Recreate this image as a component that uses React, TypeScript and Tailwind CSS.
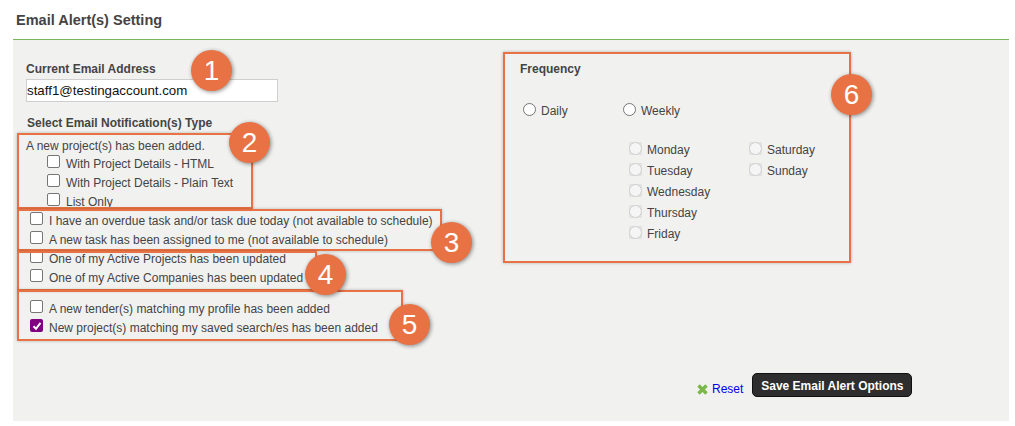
const font = "font-['Liberation_Sans',Arial,sans-serif]";

function Check({ label, checked, left }: { label: string; checked?: boolean; left: string }) {
    return (
        <label className={`flex items-center h-[19px] ${left}`}>
            {checked ? (
                <span className="w-[13px] h-[13px] rounded-[2px] bg-[#800080] flex items-center justify-center shrink-0 -mt-[4px]">
                    <svg width="10" height="10" viewBox="0 0 10 10">
                        <path d="M1.5 5.2 L4 7.8 L8.5 1.8" fill="none" stroke="#fff" strokeWidth="2" />
                    </svg>
                </span>
            ) : (
                <span className="w-[13px] h-[13px] rounded-[2px] border border-[#767676] bg-white shrink-0 -mt-[4px]"></span>
            )}
            <span className="ml-[6px] whitespace-nowrap">{label}</span>
        </label>
    );
}

function Radio({ label, disabled }: { label: string; disabled?: boolean }) {
    return (
        <label className="flex items-center h-[21px]">
            {disabled ? (
                <span className="w-[13px] h-[13px] bg-[#e2e2e2] rounded-[1px] shrink-0 -mt-[3px]">
                    <span className="block w-[13px] h-[13px] rounded-full border border-[#d0d0d0] bg-[#f5f5f5]"></span>
                </span>
            ) : (
                <span className="w-[13px] h-[13px] rounded-full border border-[#767676] bg-white shrink-0 -mt-[3px]"></span>
            )}
            <span className="ml-[5px] whitespace-nowrap">{label}</span>
        </label>
    );
}

function Badge({ n, className }: { n: number; className: string }) {
    return (
        <div className={`absolute w-[41px] h-[41px] rounded-full bg-[#e97245] text-white flex items-center justify-center text-[28px] leading-none shadow-[1px_1px_4px_rgba(0,0,0,0.45)] ${className}`}>
            {n}
        </div>
    );
}

function Box({ className }: { className: string }) {
    return <div className={`absolute border-2 border-[#e97245] shadow-[0_0_3px_rgba(0,0,0,0.25)] ${className}`}></div>;
}

export default function App() {
    return (
        <div className={`relative w-[1015px] h-[426px] bg-white overflow-hidden text-[12px] text-[#444] ${font}`}>
            <h1 className="h-[39px] pl-4 pt-[11px] text-[14.5px] leading-[18px] font-bold text-[#444]">Email Alert(s) Setting</h1>
            <div className="ml-[13px] mr-[6px] h-[382px] border-t border-[#7ab55c] bg-[#f1f1f0] flex">
                <div className="w-[487px] pl-[13px] pt-[22px]">
                    <div className="font-bold leading-[15px]">Current Email Address</div>
                    <div className="mt-[2px] w-[252px] h-[23px] border border-[#cfcfcf] bg-white text-[13.3px] leading-[21px] text-[#111]">staff1@testingaccount.com</div>
                    <div className="mt-[14px] ml-[1px] font-bold leading-[15px]">Select Email Notification(s) Type</div>
                    <div className="mt-[8px] leading-[14px]">A new project(s) has been added.</div>
                    <div className="mt-[1px]">
                        <Check left="pl-[21px]" label="With Project Details - HTML" />
                        <Check left="pl-[21px]" label="With Project Details - Plain Text" />
                        <Check left="pl-[21px]" label="List Only" />
                    </div>
                    <div>
                        <Check left="pl-[4px]" label="I have an overdue task and/or task due today (not available to schedule)" />
                        <Check left="pl-[4px]" label="A new task has been assigned to me (not available to schedule)" />
                        <Check left="pl-[4px]" label="One of my Active Projects has been updated" />
                        <Check left="pl-[4px]" label="One of my Active Companies has been updated" />
                    </div>
                    <div className="mt-[12px]">
                        <Check left="pl-[4px]" label="A new tender(s) matching my profile has been added" />
                        <Check checked left="pl-[4px]" label="New project(s) matching my saved search/es has been added" />
                    </div>
                </div>
                <div className="flex-1 flex flex-col">
                    <div className="pl-[20px] pt-[22px] font-bold leading-[15px]">Frequency</div>
                    <div className="flex pl-[23px] mt-[23px]">
                        <div className="w-[100px]"><Radio label="Daily" /></div>
                        <Radio label="Weekly" />
                    </div>
                    <div className="flex pl-[129px] mt-[18px]">
                        <div className="w-[120px]">
                            <Radio disabled label="Monday" />
                            <Radio disabled label="Tuesday" />
                            <Radio disabled label="Wednesday" />
                            <Radio disabled label="Thursday" />
                            <Radio disabled label="Friday" />
                        </div>
                        <div>
                            <Radio disabled label="Saturday" />
                            <Radio disabled label="Sunday" />
                        </div>
                    </div>
                    <div className="flex items-start mt-auto mb-[23px] ml-[197px]">
                        <svg width="11" height="11" viewBox="0 0 11 11" className="mt-[11px]">
                            <path d="M1.5 1.5 L9.5 9.5 M9.5 1.5 L1.5 9.5" stroke="#7ab648" strokeWidth="3.4" />
                        </svg>
                        <a className="ml-[4px] mt-[7px] text-[#0000ee]">Reset</a>
                        <button className="ml-[9px] pt-[1px] w-[160px] h-[24px] rounded-[5px] bg-[#2e2e2e] border border-[#111] text-white font-bold">Save Email Alert Options</button>
                    </div>
                </div>
            </div>

            <Box className="left-[17px] top-[133px] w-[236px] h-[76px]" />
            <Box className="left-[17px] top-[209px] w-[425px] h-[42px]" />
            <Box className="left-[17px] top-[251px] w-[300px] h-[40px]" />
            <Box className="left-[17px] top-[290px] w-[386px] h-[51px]" />
            <Box className="left-[503px] top-[52px] w-[348px] h-[211px]" />
            <Badge n={1} className="left-[191px] top-[50px]" />
            <Badge n={2} className="left-[229px] top-[122px]" />
            <Badge n={3} className="left-[431px] top-[222px]" />
            <Badge n={4} className="left-[305px] top-[254px]" />
            <Badge n={5} className="left-[389px] top-[304px]" />
            <Badge n={6} className="left-[831px] top-[74px]" />
        </div>
    );
}
